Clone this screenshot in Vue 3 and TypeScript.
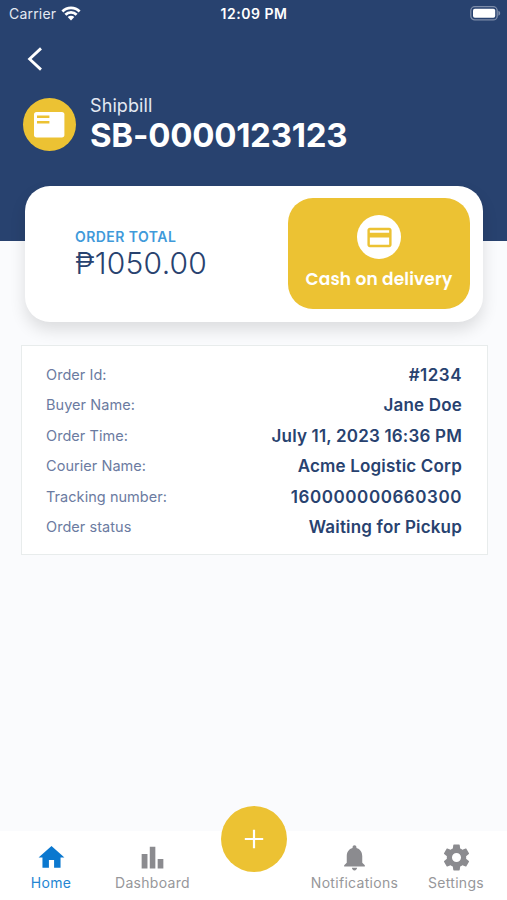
<script setup lang="ts">
interface Detail {
  label: string
  value: string
  kind: string
}

interface Tab {
  name: string
  icon: string
  kind: string
}

const details: Detail[] = [
  { label: 'Order Id:', value: '#1234', kind: 'id' },
  { label: 'Buyer Name:', value: 'Jane Doe', kind: 'buyer' },
  { label: 'Order Time:', value: 'July 11, 2023 16:36 PM', kind: 'time' },
  { label: 'Courier Name:', value: 'Acme Logistic Corp', kind: 'courier' },
  { label: 'Tracking number:', value: '160000000660300', kind: 'tracking' },
  { label: 'Order status', value: 'Waiting for Pickup', kind: 'status' },
]

const tabs: Tab[] = [
  { name: 'Home', kind: 'home', icon: 'M10 20v-6h4v6h5v-8h3L12 3 2 12h3v8z' },
  { name: 'Dashboard', kind: 'dashboard', icon: 'M3.6 9.3h4.5v11.2H3.6zM9.9 3.6h4.3v16.9H9.9zM16 13.2h4.4v7.3H16z' },
  {
    name: 'Notifications',
    kind: 'notifications',
    icon: 'M12 22c1.1 0 2-.9 2-2h-4c0 1.1.9 2 2 2zm6-6v-5c0-3.07-1.64-5.64-4.5-6.32V4c0-.83-.67-1.5-1.5-1.5s-1.5.67-1.5 1.5v.68C7.63 5.36 6 7.92 6 11v5l-2 2v1h16v-1l-2-2z',
  },
  {
    name: 'Settings',
    kind: 'settings',
    icon: 'M12 15.5A3.5 3.5 0 0 1 8.5 12 3.5 3.5 0 0 1 12 8.5a3.5 3.5 0 0 1 3.5 3.5 3.5 3.5 0 0 1-3.5 3.5m7.43-2.53c.04-.32.07-.64.07-.97s-.03-.66-.07-1l2.11-1.63c.19-.15.24-.42.12-.64l-2-3.46c-.12-.22-.39-.31-.61-.22l-2.49 1c-.52-.39-1.06-.73-1.69-.98l-.37-2.65A.506.506 0 0 0 14 2h-4c-.25 0-.46.18-.5.42l-.37 2.65c-.63.25-1.17.59-1.69.98l-2.49-1c-.22-.09-.49 0-.61.22l-2 3.46c-.13.22-.07.49.12.64L4.57 11c-.04.34-.07.67-.07 1s.03.65.07.97l-2.11 1.66c-.19.15-.25.42-.12.64l2 3.46c.12.22.39.3.61.22l2.49-1.01c.52.4 1.06.74 1.69.99l.37 2.65c.04.24.25.42.5.42h4c.25 0 .46-.18.5-.42l.37-2.65c.63-.26 1.17-.59 1.69-.99l2.49 1.01c.22.08.49 0 .61-.22l2-3.46c.12-.22.07-.49-.12-.64z',
  },
]
</script>

<template>
  <div class="screen">
    <header class="header">
      <div class="status-bar">
        <div class="carrier">
          <span>Carrier</span>
          <svg class="wifi" viewBox="0 0 20 15">
            <path d="M1.4 5.4a12.2 12.2 0 0 1 17.2 0M4.4 8.7a7.9 7.9 0 0 1 11.2 0" />
            <path class="wifi-dot" d="M10 14.4 6.7 11a4.7 4.7 0 0 1 6.6 0z" />
          </svg>
        </div>
        <span class="clock">12:09 PM</span>
        <svg class="battery" viewBox="0 0 31 15">
          <rect class="battery-shell" x=".8" y=".7" width="26.4" height="13.2" rx="4" />
          <rect class="battery-level" x="3" y="2.8" width="22.2" height="9" rx="1.8" />
          <path class="battery-tip" d="M28.4 4.8c2.4.9 2.4 4.1 0 5z" />
        </svg>
      </div>
      <button class="back" aria-label="Back">
        <svg viewBox="0 0 16 24"><path d="M14 1.4 2.6 12 14 22.6" /></svg>
      </button>
      <div class="title-row">
        <div class="bill-badge">
          <svg viewBox="0 0 31 26">
            <rect class="bill-sheet" width="30.4" height="25.4" rx="2.6" />
            <path class="bill-lines" d="M3 4.7h12.4M3 10.3h12.4" />
          </svg>
        </div>
        <div class="titles">
          <span class="subtitle">Shipbill</span>
          <h1>SB-0000123123</h1>
        </div>
      </div>
    </header>

    <section class="total-card">
      <div class="total">
        <span class="total-label">ORDER TOTAL</span>
        <span class="total-amount">₱1050.00</span>
      </div>
      <div class="payment">
        <div class="payment-icon">
          <svg viewBox="0 0 24 24">
            <path d="M20 4H4c-1.11 0-1.99.89-1.99 2L2 18c0 1.11.89 2 2 2h16c1.11 0 2-.89 2-2V6c0-1.11-.89-2-2-2zm0 14H4v-6h16v6zm0-10H4V6h16v2z" />
          </svg>
        </div>
        <span class="payment-label">Cash on delivery</span>
      </div>
    </section>

    <dl class="details">
      <div v-for="row in details" :key="row.kind" class="detail" :class="row.kind">
        <dt>{{ row.label }}</dt>
        <dd>{{ row.value }}</dd>
      </div>
    </dl>

    <nav class="tab-bar">
      <a v-for="tab in tabs" :key="tab.kind" class="tab" :class="tab.kind">
        <svg viewBox="0 0 24 24"><path :d="tab.icon" /></svg>
        <span>{{ tab.name }}</span>
      </a>
      <button class="add" aria-label="Add">
        <svg viewBox="0 0 20 20"><path d="M10 .8v18.4M.8 10h18.4" /></svg>
      </button>
    </nav>
  </div>
</template>

<style>
body {
  margin: 0;
}
</style>

<style scoped>
.screen {
  display: flex;
  flex-direction: column;
  box-sizing: border-box;
  width: 507px;
  height: 900px;
  overflow: hidden;
  background: #fafbfd;
  font-family: Inter, 'Liberation Sans', sans-serif;
  color: #28426f;
}

button {
  padding: 0;
  border: 0;
  background: none;
}

svg {
  display: block;
}

.header {
  flex: none;
  height: 241px;
  background: #28426f;
  color: #fff;
}

.status-bar {
  display: grid;
  grid-template-columns: 1fr auto 1fr;
  align-items: center;
  height: 27px;
  padding: 0 6px 0 7px;
  font-size: 14px;
  line-height: 20px;
}

.carrier {
  display: flex;
  align-items: center;
  gap: 5px;
  padding-left: 2px;
  color: #e4e9f2;
  letter-spacing: 0.2px;
}

.wifi {
  width: 20px;
  height: 15px;
  fill: none;
  stroke: #fff;
  stroke-width: 2.8;
}

.wifi-dot {
  fill: #fff;
  stroke: none;
}

.clock {
  font-weight: 600;
  letter-spacing: 0.55px;
}

.battery {
  justify-self: end;
  width: 31px;
  height: 15px;
}

.battery-shell {
  fill: none;
  stroke: #7d8ca9;
  stroke-width: 1.3;
}

.battery-level {
  fill: #fff;
}

.battery-tip {
  fill: #7d8ca9;
}

.back {
  display: block;
  margin: 20px 0 0 27px;
}

.back svg {
  width: 16px;
  height: 24px;
  fill: none;
  stroke: #fff;
  stroke-width: 2.8;
}

.title-row {
  display: flex;
  gap: 14px;
  padding: 24px 0 0 23px;
}

.bill-badge {
  display: grid;
  place-items: center;
  width: 53px;
  height: 53px;
  margin-top: 3px;
  border-radius: 50%;
  background: #ecc233;
}

.bill-badge svg {
  width: 31px;
  height: 26px;
}

.bill-sheet {
  fill: #fff;
}

.bill-lines {
  stroke: #ecc233;
  stroke-width: 2.6;
}

.titles {
  display: flex;
  flex-direction: column;
}

.subtitle {
  font-size: 18px;
  line-height: 22px;
  letter-spacing: 0.1px;
  color: #e4e9f2;
}

h1 {
  margin: 0;
  font-size: 33px;
  font-weight: 700;
  line-height: 36px;
  letter-spacing: -0.25px;
}

.total-card {
  display: flex;
  flex: none;
  justify-content: space-between;
  box-sizing: border-box;
  width: 458px;
  height: 136px;
  margin: -55px 0 0 25px;
  padding: 12px 13px 12px 50px;
  border-radius: 25px;
  background: #fff;
  box-shadow: 0 8px 16px rgba(0, 0, 0, 0.12);
}

.total {
  display: flex;
  flex-direction: column;
  padding-top: 29px;
}

.total-label {
  font-size: 14px;
  font-weight: 600;
  line-height: 19px;
  letter-spacing: 0.45px;
  color: #3f9ada;
}

.total-amount {
  font-size: 30px;
  font-weight: 300;
  line-height: 34px;
  letter-spacing: 0.25px;
}

.payment {
  display: flex;
  flex-direction: column;
  align-items: center;
  box-sizing: border-box;
  width: 182px;
  height: 111px;
  padding-top: 17px;
  border-radius: 25px;
  background: #ecc233;
}

.payment-icon {
  display: grid;
  place-items: center;
  width: 44px;
  height: 44px;
  border-radius: 50%;
  background: #fff;
}

.payment-icon svg {
  width: 29px;
  height: 29px;
  fill: #ecc233;
}

.payment-label {
  margin-top: 8px;
  font-family: Poppins, Inter, sans-serif;
  font-size: 17px;
  font-weight: 600;
  line-height: 24px;
  letter-spacing: 0.15px;
  white-space: nowrap;
  color: #fff;
}

.details {
  flex: none;
  box-sizing: border-box;
  width: 467px;
  height: 210px;
  margin: 23px 0 0 21px;
  padding: 13.5px 25px 0 24px;
  border: 1px solid #e8ecec;
  background: #fff;
}

.detail {
  display: flex;
  align-items: center;
  justify-content: space-between;
  height: 30.5px;
  line-height: 20px;
}

dt {
  font-size: 14.5px;
  letter-spacing: 0.05px;
  color: #6b7ba1;
}

dd {
  margin: 0;
  font-size: 17px;
  font-weight: 600;
  letter-spacing: 0.18px;
}

.id dd {
  letter-spacing: 0.5px;
}

.tracking dd {
  letter-spacing: 0.56px;
}

.tab-bar {
  position: relative;
  display: grid;
  grid-template-columns: 102px 101px 1fr 101px 102px;
  flex: none;
  height: 69px;
  margin-top: auto;
  background: #fff;
}

.tab {
  display: flex;
  flex-direction: column;
  align-items: center;
  padding-top: 11px;
  font-size: 14px;
  line-height: 20px;
  letter-spacing: 0.3px;
  color: #97979a;
}

.tab svg {
  width: 31px;
  height: 31px;
  fill: #8b8b8f;
}

.notifications {
  grid-column: 4;
}

.home {
  color: #2585d2;
}

.home svg {
  fill: #0b78cf;
}

.add {
  position: absolute;
  top: -25px;
  left: 221px;
  display: grid;
  place-items: center;
  width: 66px;
  height: 66px;
  border-radius: 50%;
  background: #ecc233;
}

.add svg {
  width: 20px;
  height: 20px;
  stroke: #fff;
  stroke-width: 2.2;
}
</style>
